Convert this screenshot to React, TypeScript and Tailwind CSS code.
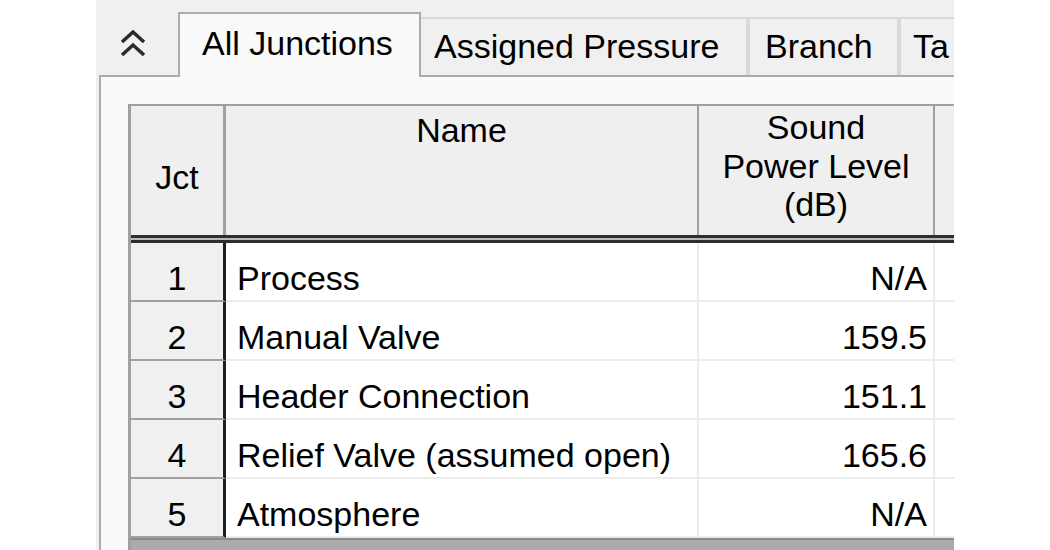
import React from "react";

const rows = [
  { n: "1", name: "Process", v: "N/A" },
  { n: "2", name: "Manual Valve", v: "159.5" },
  { n: "3", name: "Header Connection", v: "151.1" },
  { n: "4", name: "Relief Valve (assumed open)", v: "165.6" },
  { n: "5", name: "Atmosphere", v: "N/A" },
];

export default function App() {
  return (
    <div
      className="w-[1050px] h-[550px] bg-white flex text-black text-[34px] leading-[38px]"
      style={{ fontFamily: '"Liberation Sans", Arial, sans-serif' }}
    >
      <div className="ml-[96px] w-[858px] h-full bg-[#f0f0f0] overflow-hidden flex flex-col">
        {/* Tab strip */}
        <div className="h-[75px] flex items-end shrink-0">
          <div className="w-[82px] h-full shrink-0">
            <svg className="ml-[24px] mt-[30px]" width="26" height="26" viewBox="0 0 26 26">
              <polyline points="2,12 13,2 24,12" fill="none" stroke="#2a2a2a" strokeWidth="3.5" />
              <polyline points="2,25 13,15 24,25" fill="none" stroke="#2a2a2a" strokeWidth="3.5" />
            </svg>
          </div>
          <div className="relative z-10 mb-[-2px] h-[65px] w-[243px] shrink-0 border-x-2 border-t-2 border-[#acacac] bg-[#f9f9f9] pl-[22px] pt-[10px] whitespace-nowrap">
            All Junctions
          </div>
          <div className="h-[58px] w-[327px] shrink-0 border-t-2 border-r-2 border-[#d9d9d9] bg-[#f0f0f0] pl-[13px] pt-[8px] whitespace-nowrap">
            Assigned Pressure
          </div>
          <div className="h-[58px] w-[151px] shrink-0 border-t-2 border-x-2 border-[#d9d9d9] bg-[#f0f0f0] pl-[15px] pt-[8px] whitespace-nowrap">
            Branch
          </div>
          <div className="h-[58px] w-[60px] shrink-0 border-t-2 border-l-2 border-[#d9d9d9] bg-[#f0f0f0] pl-[12px] pt-[8px] whitespace-nowrap">
            Ta
          </div>
        </div>

        {/* Panel */}
        <div className="flex-1 ml-[3px] border-l-2 border-t-2 border-[#acacac] bg-[#f9f9f9] pl-[27px] pt-[27px] flex flex-col min-h-0">
          {/* Grid */}
          <div className="flex-1 flex flex-col border-l-[3px] border-t-2 border-[#a0a0a0] bg-[#ababab] min-h-0">
            {/* Header */}
            <div className="h-[129px] flex bg-[#efefef] shrink-0">
              <div className="w-[95px] shrink-0 border-r-[3px] border-[#a0a0a0] text-center pt-[52px]">Jct</div>
              <div className="w-[473px] shrink-0 border-r-2 border-[#a0a0a0] text-center pt-[5px]">Name</div>
              <div className="w-[236px] shrink-0 border-r-2 border-[#a0a0a0] text-center pt-[2px] leading-[38.5px]">
                Sound
                <br />
                Power Level
                <br />
                (dB)
              </div>
              <div className="flex-1" />
            </div>
            <div className="h-[8px] shrink-0 border-y-[3px] border-[#2e2e2e] bg-[#b8b8b8]" />
            {/* Rows */}
            {rows.map((r) => (
              <div key={r.n} className="h-[59px] flex shrink-0">
                <div className="w-[95px] shrink-0 border-r-[3px] border-r-[#1e1e1e] border-b-2 border-b-[#a0a0a0] bg-[#f0f0f0] text-center pt-[16px]">
                  {r.n}
                </div>
                <div className="w-[473px] shrink-0 border-r-2 border-b-2 border-[#ececec] bg-white pl-[11px] pt-[16px] whitespace-nowrap">
                  {r.name}
                </div>
                <div className="w-[236px] shrink-0 border-r-2 border-b-2 border-[#ececec] bg-white text-right pr-[6px] pt-[16px]">
                  {r.v}
                </div>
                <div className="flex-1 border-b-2 border-[#ececec] bg-white" />
              </div>
            ))}
            <div className="flex-1 border-t-2 border-[#8a8a8a] bg-[#ababab]" />
          </div>
        </div>
      </div>
    </div>
  );
}
